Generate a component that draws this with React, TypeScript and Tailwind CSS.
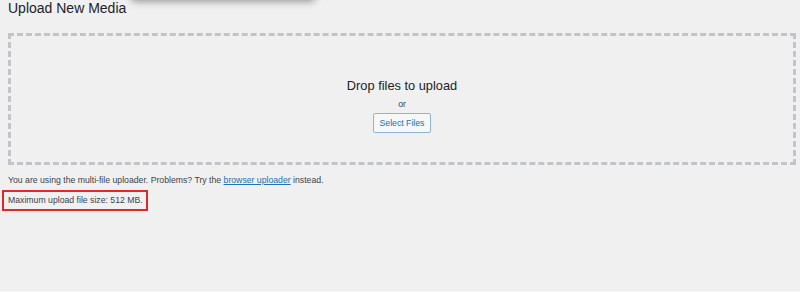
import React from "react";

export default function App() {
  return (
    <div className="relative w-[800px] h-[292px] overflow-hidden bg-[#f0f0f1] text-[#1d2327] font-['Liberation_Sans',Arial,sans-serif]">
      {/* shadow of an element above the viewport */}
      <div className="absolute left-[130px] top-[-24px] w-[186px] h-[24px] rounded-[6px] bg-[#f0f0f1] shadow-[0_2px_7px_rgba(0,0,0,0.35)]" />

      <h1 className="pl-2 text-[14px] leading-[16px] font-normal">Upload New Media</h1>

      <div className="mt-[17px] ml-2 w-[788px] h-[132px] border-[3px] border-dashed border-[#c3c4c7] flex flex-col items-center pt-[41.5px]">
        <div className="text-[12.8px] leading-[15px] text-[#1d2327]">Drop files to upload</div>
        <div className="mt-[5.5px] text-[8.7px] leading-[12px] text-[#3c434a]">or</div>
        <button className="mt-[2.5px] h-[20px] w-[58px] rounded-[2px] border border-[#8fb4d6] bg-[#f6f7f7] text-[8.7px] leading-[12px] text-[#2271b1]">
          Select Files
        </button>
      </div>

      <p className="mt-[9px] pl-2 text-[8.7px] leading-[12px] text-[#3c434a]">
        You are using the multi-file uploader. Problems? Try the{" "}
        <span className="text-[#2271b1] underline">browser uploader</span> instead.
      </p>

      <div className="mt-[3.5px] ml-[2px] w-[146px] border-2 border-[#e0282a] pl-[4px] pt-[2.4px] pb-[3.6px]">
        <p className="text-[8.7px] leading-[12px] text-[#3c434a]">Maximum upload file size: 512 MB.</p>
      </div>

      <div className="absolute bottom-0 left-0 w-full h-[1px] bg-[#f7f7f8]" />
    </div>
  );
}
